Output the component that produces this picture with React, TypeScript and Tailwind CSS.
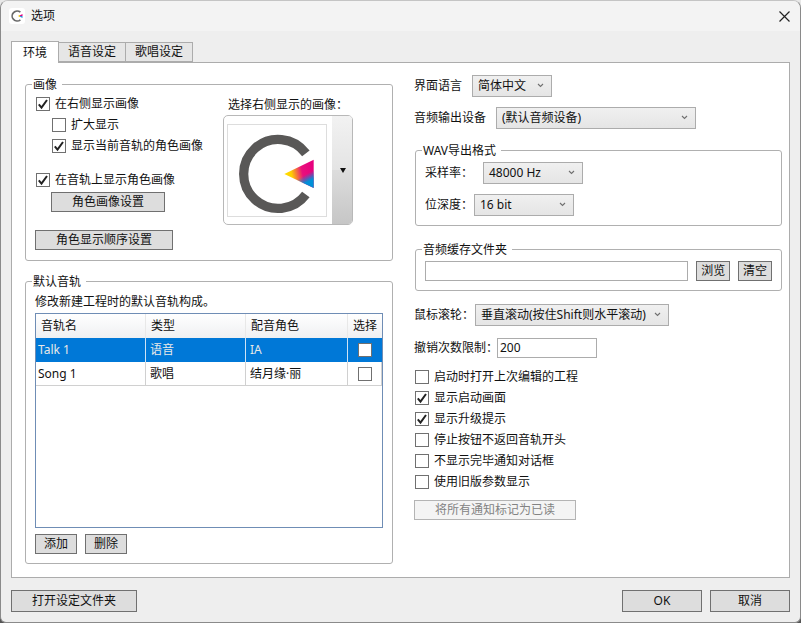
const font = { fontFamily: '"Noto Sans", "Noto Sans CJK SC", sans-serif' };

const Check = ({ checked, className = "" }: { checked?: boolean; className?: string }) => (
  <span className={`flex h-[14px] w-[14px] shrink-0 items-center justify-center border border-[#707070] bg-white ${className}`}>
    {checked && (
      <svg width="12" height="12" viewBox="0 0 12 12">
        <path d="M1.8 6.4 L4.5 9.6 L10 2" fill="none" stroke="#222" strokeWidth="2" />
      </svg>
    )}
  </span>
);

const CheckRow = ({ label, checked, className = "" }: { label: string; checked?: boolean; className?: string }) => (
  <div className={`flex h-[21px] items-center gap-[5px] ${className}`}>
    <Check checked={checked} />
    <span>{label}</span>
  </div>
);

const Btn = ({ label, className = "" }: { label: string; className?: string }) => (
  <button className={`flex h-[20px] items-center justify-center border border-[#707070] bg-[#dddddd] text-[#111] ${className}`}>{label}</button>
);

const Select = ({ value, className = "" }: { value: string; className?: string }) => (
  <div className={`flex h-[22px] items-center justify-between border border-[#acacac] bg-gradient-to-b from-[#f0f0f0] to-[#e5e5e5] pl-[5px] pr-[7px] ${className}`}>
    <span>{value}</span>
    <svg width="7" height="5" viewBox="0 0 7 5" className="mb-[2px]">
      <path d="M1 1 L3.5 3.5 L6 1" fill="none" stroke="#707070" strokeWidth="1.1" />
    </svg>
  </div>
);

const Group = ({ title, className = "", children }: { title: string; className?: string; children: React.ReactNode }) => (
  <div className={`relative rounded-[3px] border border-[#b0b0b0] ${className}`}>
    <span className="absolute left-[6px] top-[-8px] bg-white px-[1px] pr-[5px] leading-[15px]">{title}</span>
    {children}
  </div>
);

const Logo = () => (
  <svg width="100" height="93" viewBox="0 0 100 93" className="border border-[#dddddd]">
    <defs>
      <linearGradient id="tri" x1="0" y1="0.6" x2="1" y2="0.4">
        <stop offset="0" stopColor="#ffe000" />
        <stop offset="0.25" stopColor="#ffd000" />
        <stop offset="0.62" stopColor="#e9107c" />
        <stop offset="1" stopColor="#e6007e" />
      </linearGradient>
      <linearGradient id="blu" x1="0.3" y1="0.3" x2="0.7" y2="1">
        <stop offset="0.5" stopColor="#0090d8" stopOpacity="0" />
        <stop offset="0.82" stopColor="#0090d8" />
      </linearGradient>
    </defs>
    <path d="M 79.5 29 A 35.25 35.25 0 1 0 79.5 71" fill="none" stroke="#595857" strokeWidth="9.5" />
    <polygon points="57.5,50 87.5,35.5 87.5,64.5" fill="url(#tri)" />
    <polygon points="57.5,50 87.5,35.5 87.5,64.5" fill="url(#blu)" />
  </svg>
);

const Tab = ({ label, active }: { label: string; active?: boolean }) =>
  active ? (
    <div className="relative z-10 mb-[-1px] flex h-[22px] w-[48px] items-center justify-center border border-b-0 border-[#acacac] bg-white">{label}</div>
  ) : (
    <div className="flex h-[20px] w-[67px] items-center justify-center border border-l-0 border-[#acacac] bg-[#e6e6e6]">{label}</div>
  );

const headerCell = "flex items-center border-r border-[#e8e8e8] pl-[5px]";
const cell = "flex items-center border-r border-[#d0d0d0]";

export default function App() {
  return (
    <div className="h-[623px] w-[801px] bg-gradient-to-b from-[#e8e8e8] from-50% to-[#555555] to-50%">
      <div style={font} className="flex h-[623px] w-[801px] flex-col overflow-hidden rounded-t-[8px] rounded-b-[6px] border border-[#8a8a8a] border-t-[#c4c4c4] bg-[#eeeeee] text-[12px] leading-[16px] text-[#111]">
        {/* title bar */}
        <div className="flex h-[30px] shrink-0 items-center bg-[#f3f3f3] pl-[8px] pr-[8px]">
          <div className="flex h-[16px] w-[16px] items-center justify-center rounded-[3px] bg-white">
            <svg width="14" height="14" viewBox="0 0 14 14">
              <path d="M 10.4 3.2 A 5 5 0 1 0 10.4 10.8" fill="none" stroke="#6a6a6a" strokeWidth="1.7" />
              <polygon points="8.5,7 12.5,5 12.5,7" fill="#e6007e" />
              <polygon points="8.5,7 12.5,7 12.5,9" fill="#2a90d8" />
              <polygon points="8,7 10,6 10,8" fill="#ffd800" />
            </svg>
          </div>
          <span className="ml-[6px] flex-1">选项</span>
          <svg width="11" height="11" viewBox="0 0 11 11" className="mr-[2px]">
            <path d="M0.5 0.5 L10.5 10.5 M10.5 0.5 L0.5 10.5" stroke="#222" strokeWidth="1.2" />
          </svg>
        </div>

        <div className="flex flex-1 flex-col px-[10px] pt-[10px]">
          {/* tabs */}
          <div className="flex h-[21px] items-end">
            <Tab label="环境" active />
            <Tab label="语音设定" />
            <Tab label="歌唱设定" />
          </div>

          {/* panel */}
          <div className="flex h-[516px] gap-[22px] border border-[#acacac] bg-white pl-[13px] pr-[7px] pt-[21px]">
            {/* left */}
            <div className="w-[368px]">
              <Group title="画像" className="flex h-[177px] pl-[10px]">
                <div className="pt-[8px]">
                  <CheckRow label="在右侧显示画像" checked />
                  <CheckRow label="扩大显示" className="ml-[16px]" />
                  <CheckRow label="显示当前音轨的角色画像" checked className="ml-[16px]" />
                  <CheckRow label="在音轨上显示角色画像" checked className="mt-[13px]" />
                  <Btn label="角色画像设置" className="ml-[15px] mt-[2px] w-[114px]" />
                  <Btn label="角色显示顺序设置" className="-ml-px mt-[18px] w-[138px]" />
                </div>
                <div className="absolute left-[197px] top-[12px]">
                  <div className="pl-[5px] leading-[16px]">选择右侧显示的画像：</div>
                  <div className="mt-[2px] flex h-[110px] w-[130px] overflow-hidden rounded-[5px] border border-[#b8b8b8] bg-white">
                    <div className="flex flex-1 items-center justify-center pr-[3px]">
                      <Logo />
                    </div>
                    <div className="flex w-[20px] flex-col items-center bg-[#eeeeee]">
                      <div className="h-1/2 w-full bg-gradient-to-b from-[#f2f2f2] to-[#e4e4e4]" />
                      <div className="relative h-1/2 w-full bg-gradient-to-b from-[#dddddd] to-[#c6c6c6]" />
                    </div>
                  </div>
                </div>
                <svg width="6" height="5" viewBox="0 0 6 5" className="absolute left-[314px] top-[83px]">
                  <path d="M0 0 H6 L3 5 Z" fill="#111" />
                </svg>
              </Group>

              <Group title="默认音轨" className="mt-[20px] h-[283px] px-[9px] pt-[12px]">
                <div className="h-[16px]">修改新建工程时的默认音轨构成。</div>
                <div className="mt-[3px] h-[215px] border border-[#6f8db5] bg-white">
                  <div className="grid h-[24px] grid-cols-[110px_100px_102px_34px] bg-gradient-to-b from-white to-[#eff0f2]">
                    <div className={headerCell}>音轨名</div>
                    <div className={headerCell}>类型</div>
                    <div className={headerCell}>配音角色</div>
                    <div className="flex items-center pl-[5px]">选择</div>
                  </div>
                  <div className="grid h-[24px] grid-cols-[110px_100px_102px_34px] bg-[#0078d7] text-[#e8e8e8]">
                    <div className="flex items-center border-r border-[#cfe3f5] pl-[2px]">Talk 1</div>
                    <div className="flex items-center border-r border-[#cfe3f5] pl-[4px]">语音</div>
                    <div className="flex items-center border-r border-[#cfe3f5] pl-[4px]">IA</div>
                    <div className="flex items-center justify-center">
                      <Check />
                    </div>
                  </div>
                  <div className="grid h-[24px] grid-cols-[110px_100px_102px_34px] border-b border-[#d0d0d0]">
                    <div className={`${cell} pl-[2px]`}>Song 1</div>
                    <div className={`${cell} pl-[4px]`}>歌唱</div>
                    <div className={`${cell} pl-[4px]`}>结月缘·丽</div>
                    <div className="flex items-center justify-center border-r border-[#d0d0d0]">
                      <Check />
                    </div>
                  </div>
                </div>
                <div className="mt-[6px] flex gap-[8px]">
                  <Btn label="添加" className="w-[42px]" />
                  <Btn label="删除" className="w-[42px]" />
                </div>
              </Group>
            </div>

            {/* right */}
            <div className="-ml-px -mt-[9px] w-[368px]">
              <div className="flex h-[22px] items-center">
                <span className="w-[58px]">界面语言</span>
                <Select value="简体中文" className="w-[80px]" />
              </div>
              <div className="mt-[10px] flex h-[22px] items-center">
                <span className="w-[82px]">音频输出设备</span>
                <Select value="(默认音频设备)" className="w-[200px]" />
              </div>

              <Group title="WAV导出格式" className="ml-px mt-[21px] h-[76px] px-[9px] pt-[11px]">
                <div className="flex h-[22px] items-center">
                  <span className="w-[58px]">采样率：</span>
                  <Select value="48000 Hz" className="w-[100px]" />
                </div>
                <div className="mt-[10px] flex h-[22px] items-center">
                  <span className="w-[49px]">位深度：</span>
                  <Select value="16 bit" className="w-[100px]" />
                </div>
              </Group>

              <Group title="音频缓存文件夹" className="ml-px mt-[23px] flex h-[42px] gap-[8px] px-[9px] pt-[11px]">
                <div className="h-[20px] w-[265px] border border-[#acacac] bg-white" />
                <Btn label="浏览" className="w-[34px]" />
                <Btn label="清空" className="w-[34px]" />
              </Group>

              <div className="mt-[13px] flex h-[22px] items-center">
                <span className="w-[61px]">鼠标滚轮：</span>
                <Select value="垂直滚动(按住Shift则水平滚动)" className="w-[194px]" />
              </div>
              <div className="mt-[12px] flex h-[20px] items-center">
                <span className="w-[83px] whitespace-nowrap">撤销次数限制：</span>
                <div className="flex h-[20px] w-[100px] items-center border border-[#acacac] pl-[2px]">200</div>
              </div>

              <div className="ml-px mt-[8px]">
                <CheckRow label="启动时打开上次编辑的工程" />
                <CheckRow label="显示启动画面" checked />
                <CheckRow label="显示升级提示" checked />
                <CheckRow label="停止按钮不返回音轨开头" />
                <CheckRow label="不显示完毕通知对话框" />
                <CheckRow label="使用旧版参数显示" />
              </div>
              <button className="mt-[8px] flex h-[20px] w-[162px] items-center justify-center border border-[#b4b4b4] bg-[#f4f4f4] text-[#838383]">
                将所有通知标记为已读
              </button>
            </div>
          </div>

          {/* footer */}
          <div className="mt-[12px] flex justify-between">
            <Btn label="打开设定文件夹" className="h-[22px] w-[126px]" />
            <div className="flex gap-[8px]">
              <Btn label="OK" className="h-[22px] w-[80px]" />
              <Btn label="取消" className="h-[22px] w-[80px]" />
            </div>
          </div>
        </div>
      </div>
    </div>
  );
}
